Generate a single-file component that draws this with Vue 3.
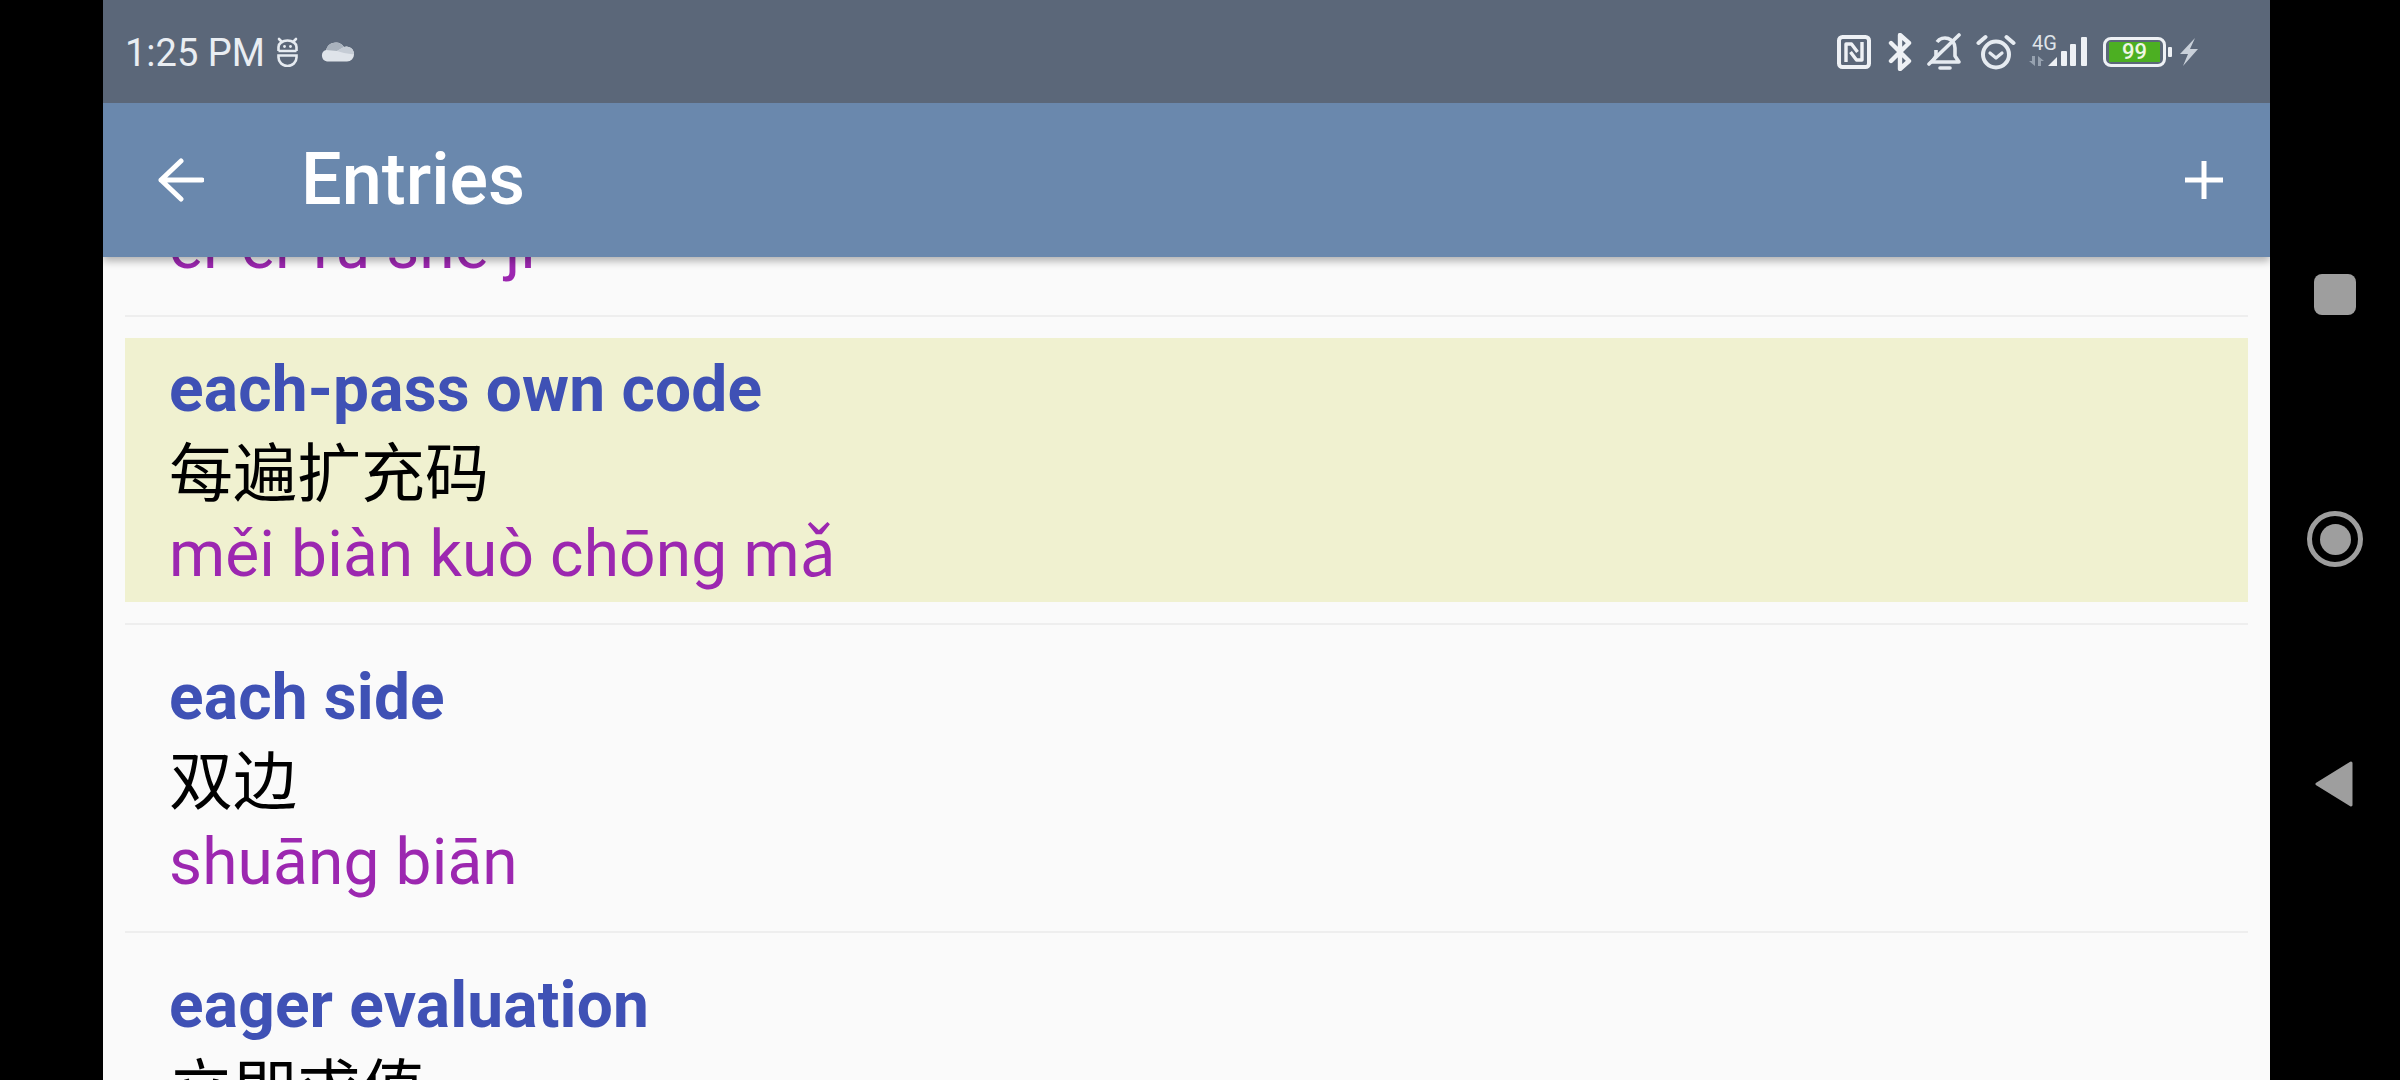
<template>
  <div class="screen">
    <div class="phone">
      <div class="status-bar">
        <div class="status-left">
          <span class="time">1:25 PM</span>
          <svg class="ic-bot" viewBox="0 0 23 30" fill="none" stroke="#e6ebf1" stroke-width="2.6">
            <path d="M3 2l3 3M20 2l-3 3" stroke-linecap="round" />
            <path d="M2.5 14V10a9 6.5 0 0 1 18 0v4M2.5 14h18M2.5 18.5v2a9 8.5 0 0 0 18 0v-2z" />
            <circle cx="8.5" cy="9.5" r="1.4" fill="#e6ebf1" stroke="none" />
            <circle cx="14.5" cy="9.5" r="1.4" fill="#e6ebf1" stroke="none" />
          </svg>
          <svg class="ic-cloud" viewBox="0 0 34 21">
            <path d="M7 20.5a6 6 0 0 1-1-11.6A10 10 0 0 1 24 6a7.5 7.5 0 0 1 10 7.5 7 7 0 0 1-7 7z" fill="#dfe4ea" />
            <path d="M6 9A10 10 0 0 1 24 6l-7 4z" fill="#a9b2bd" />
            <path d="M17 10l7-4a7.5 7.5 0 0 1 10 7.5L24 12z" fill="#c5ccd5" />
          </svg>
        </div>
        <div class="status-right">
          <svg class="ic-nfc" viewBox="0 0 34 34" fill="none" stroke="#eef1f5" stroke-width="4">
            <rect x="2" y="2" width="30" height="30" rx="3.5" />
            <path d="M9 27V9h5.5l6 8M25 7v18h-5.5l-6-8" stroke-linejoin="round" stroke-width="3.4" />
          </svg>
          <svg class="ic-bt" viewBox="0 0 24 38" fill="none" stroke="#eef1f5" stroke-width="4.4" stroke-linejoin="round" stroke-linecap="round">
            <path d="M3 10l18 18-9 8V2l9 8L3 28" />
          </svg>
          <svg class="ic-bell" viewBox="0 0 36 38" fill="none" stroke="#e6ebf1" stroke-width="3.6">
            <path d="M4 29h28l-4-6V15a10 10 0 0 0-18-6M9 17v6l-4 6" stroke-linejoin="round" />
            <path d="M13 35h10" stroke-width="3.6" stroke-linecap="round" />
            <path d="M2 31L32 2" stroke-linecap="round" />
          </svg>
          <svg class="ic-alarm" viewBox="0 0 40 36" fill="none" stroke="#e6ebf1" stroke-width="4">
            <circle cx="20" cy="20.5" r="13" />
            <path d="M14 19l6 5 6-5" stroke-linecap="round" stroke-linejoin="round" stroke-width="3.2" />
            <path d="M2.5 9l7-6M37.5 9l-7-6" stroke-linecap="round" />
          </svg>
          <div class="net">
            <span class="net-label">4G</span>
            <svg class="ic-signal" viewBox="-4 0 60 32">
              <path d="M3 19v10l-6-5h3v-5zM6 29V19l6 5H9v5z" fill="#97a2b0" />
              <path d="M16 29l9-9v9z" fill="#eef1f5" />
              <rect x="29" y="14" width="6" height="15" rx="1" fill="#eef1f5" />
              <rect x="38" y="7" width="6" height="22" rx="1" fill="#eef1f5" />
              <rect x="49" y="0" width="6" height="29" rx="1" fill="#eef1f5" />
            </svg>
          </div>
          <div class="battery">
            <div class="battery-body"><span class="battery-level">99</span></div>
            <div class="battery-tip"></div>
          </div>
          <svg class="ic-bolt" viewBox="0 0 18 28">
            <path d="M15 0L0 16h8L3 28 18 11h-8z" fill="#c9d0d9" />
          </svg>
        </div>
      </div>

      <header class="app-bar">
        <svg class="ic-back" viewBox="0 0 46 44" fill="none" stroke="#fff" stroke-width="5" stroke-linecap="round" stroke-linejoin="round">
          <path d="M23 3L3 22l20 19M3 22h41" />
        </svg>
        <h1 class="title">Entries</h1>
        <svg class="ic-add" viewBox="0 0 38 38" fill="none" stroke="#fff" stroke-width="5">
          <path d="M19 0v38M0 19h38" />
        </svg>
      </header>

      <div class="list">
        <div v-for="(entry, index) in entries" :key="index" class="row">
          <div class="row-inner" :class="{ selected: entry.selected }">
            <div class="term">{{ entry.term }}</div>
            <div class="chinese">{{ entry.chinese }}</div>
            <div class="pinyin">{{ entry.pinyin }}</div>
          </div>
        </div>
      </div>
    </div>

    <nav class="nav-bar">
      <div class="nav-square"></div>
      <div class="nav-home"><div class="nav-dot"></div></div>
      <svg class="nav-back" viewBox="0 0 40 48">
        <path d="M37 3L3 24l34 21z" fill="#9e9e9e" stroke="#9e9e9e" stroke-width="3" stroke-linejoin="round" />
      </svg>
    </nav>
  </div>
</template>

<script setup>
const entries = [
  { term: '', chinese: '', pinyin: 'ěr ěr rù shè jì' },
  { term: 'each-pass own code', chinese: '每遍扩充码', pinyin: 'měi biàn kuò chōng mǎ', selected: true },
  { term: 'each side', chinese: '双边', pinyin: 'shuāng biān' },
  { term: 'eager evaluation', chinese: '立即求值', pinyin: 'lì jí qiú zhí' }
]
</script>

<style>
html, body {
  margin: 0;
  background: #000;
}
</style>

<style scoped>
.screen {
  width: 2400px;
  height: 1080px;
  overflow: hidden;
  background: #000;
  display: flex;
  padding-left: 103px;
  box-sizing: border-box;
  font-family: Roboto, "Noto Sans CJK SC", sans-serif;
}

.phone {
  width: 2167px;
  height: 1080px;
  overflow: hidden;
  background: #fafafa;
  flex-shrink: 0;
}

.status-bar {
  height: 103px;
  background: #5b6779;
  display: flex;
  align-items: center;
  justify-content: space-between;
  padding: 0 72px 0 22px;
  box-sizing: border-box;
  position: relative;
  z-index: 3;
}

.status-left,
.status-right {
  display: flex;
  align-items: center;
}

.time {
  font-size: 38px;
  color: #e9edf2;
  line-height: 1;
  padding-top: 2px;
}

.ic-bot {
  width: 23px;
  height: 30px;
  margin-left: 11px;
}

.ic-cloud {
  width: 34px;
  height: 21px;
  margin-left: 21px;
}

.ic-nfc { width: 34px; height: 34px; }
.ic-bt { width: 24px; height: 38px; margin-left: 17px; }
.ic-bell { width: 36px; height: 38px; margin-left: 15px; }
.ic-alarm { width: 40px; height: 36px; margin-left: 13px; }

.net {
  width: 60px;
  height: 34px;
  margin-left: 12px;
  position: relative;
}

.net-label {
  position: absolute;
  left: 4px;
  top: -2px;
  font-size: 20px;
  line-height: 20px;
  color: #dfe4ea;
}

.ic-signal {
  position: absolute;
  left: 0;
  top: 2px;
  width: 60px;
  height: 32px;
}

.battery {
  display: flex;
  align-items: center;
  margin-left: 15px;
}

.battery-body {
  width: 63px;
  height: 30px;
  box-sizing: border-box;
  border: 3px solid #eef1f5;
  border-radius: 8px;
  padding: 2px 3px;
  display: flex;
}

.battery-level {
  flex: 1;
  background: #4caf22;
  color: #eef6e4;
  font-size: 22px;
  line-height: 20px;
  text-align: center;
  font-weight: 500;
}

.battery-tip {
  width: 4px;
  height: 10px;
  margin-left: 2px;
  background: #eef1f5;
  border-radius: 1px;
}

.ic-bolt {
  width: 18px;
  height: 28px;
  margin-left: 8px;
}

.app-bar {
  height: 154px;
  background: #6a88ad;
  display: flex;
  align-items: center;
  padding: 0 47px 0 55px;
  box-shadow: 0 4px 8px rgba(0, 0, 0, 0.3);
  position: relative;
  z-index: 2;
}

.ic-back {
  width: 46px;
  height: 44px;
  flex-shrink: 0;
}

.title {
  margin: 0 0 0 97px;
  flex: 1;
  font-size: 72px;
  font-weight: 500;
  color: #fff;
  line-height: 1;
}

.ic-add {
  width: 38px;
  height: 38px;
  flex-shrink: 0;
}

.list {
  margin-top: -248px;
}

.row {
  margin: 0 22px;
  padding: 21px 0;
  border-bottom: 2px solid #eeeeee;
}

.row-inner {
  height: 264px;
  padding-left: 44px;
  padding-top: 12px;
  box-sizing: border-box;
  display: flex;
  flex-direction: column;
}

.row-inner.selected {
  background: #f0f1d0;
}

.term {
  height: 79px;
  line-height: 79px;
  font-size: 64px;
  font-weight: 700;
  color: #3f51b5;
  letter-spacing: 0.17px;
}

.chinese {
  height: 91px;
  line-height: 91px;
  font-size: 64px;
  color: #000;
}

.pinyin {
  height: 70px;
  line-height: 70px;
  font-size: 64px;
  color: #9c27b0;
  letter-spacing: 0.15px;
}

.nav-bar {
  width: 130px;
  height: 1080px;
  position: relative;
}

.nav-square {
  position: absolute;
  left: 44px;
  top: 274px;
  width: 42px;
  height: 41px;
  background: #9e9e9e;
  border-radius: 8px;
}

.nav-home {
  position: absolute;
  left: 37px;
  top: 511px;
  width: 56px;
  height: 56px;
  box-sizing: border-box;
  border: 5px solid #9e9e9e;
  border-radius: 50%;
  display: flex;
  align-items: center;
  justify-content: center;
}

.nav-dot {
  width: 31px;
  height: 31px;
  background: #9e9e9e;
  border-radius: 50%;
}

.nav-back {
  position: absolute;
  left: 44px;
  top: 760px;
  width: 40px;
  height: 48px;
}
</style>
